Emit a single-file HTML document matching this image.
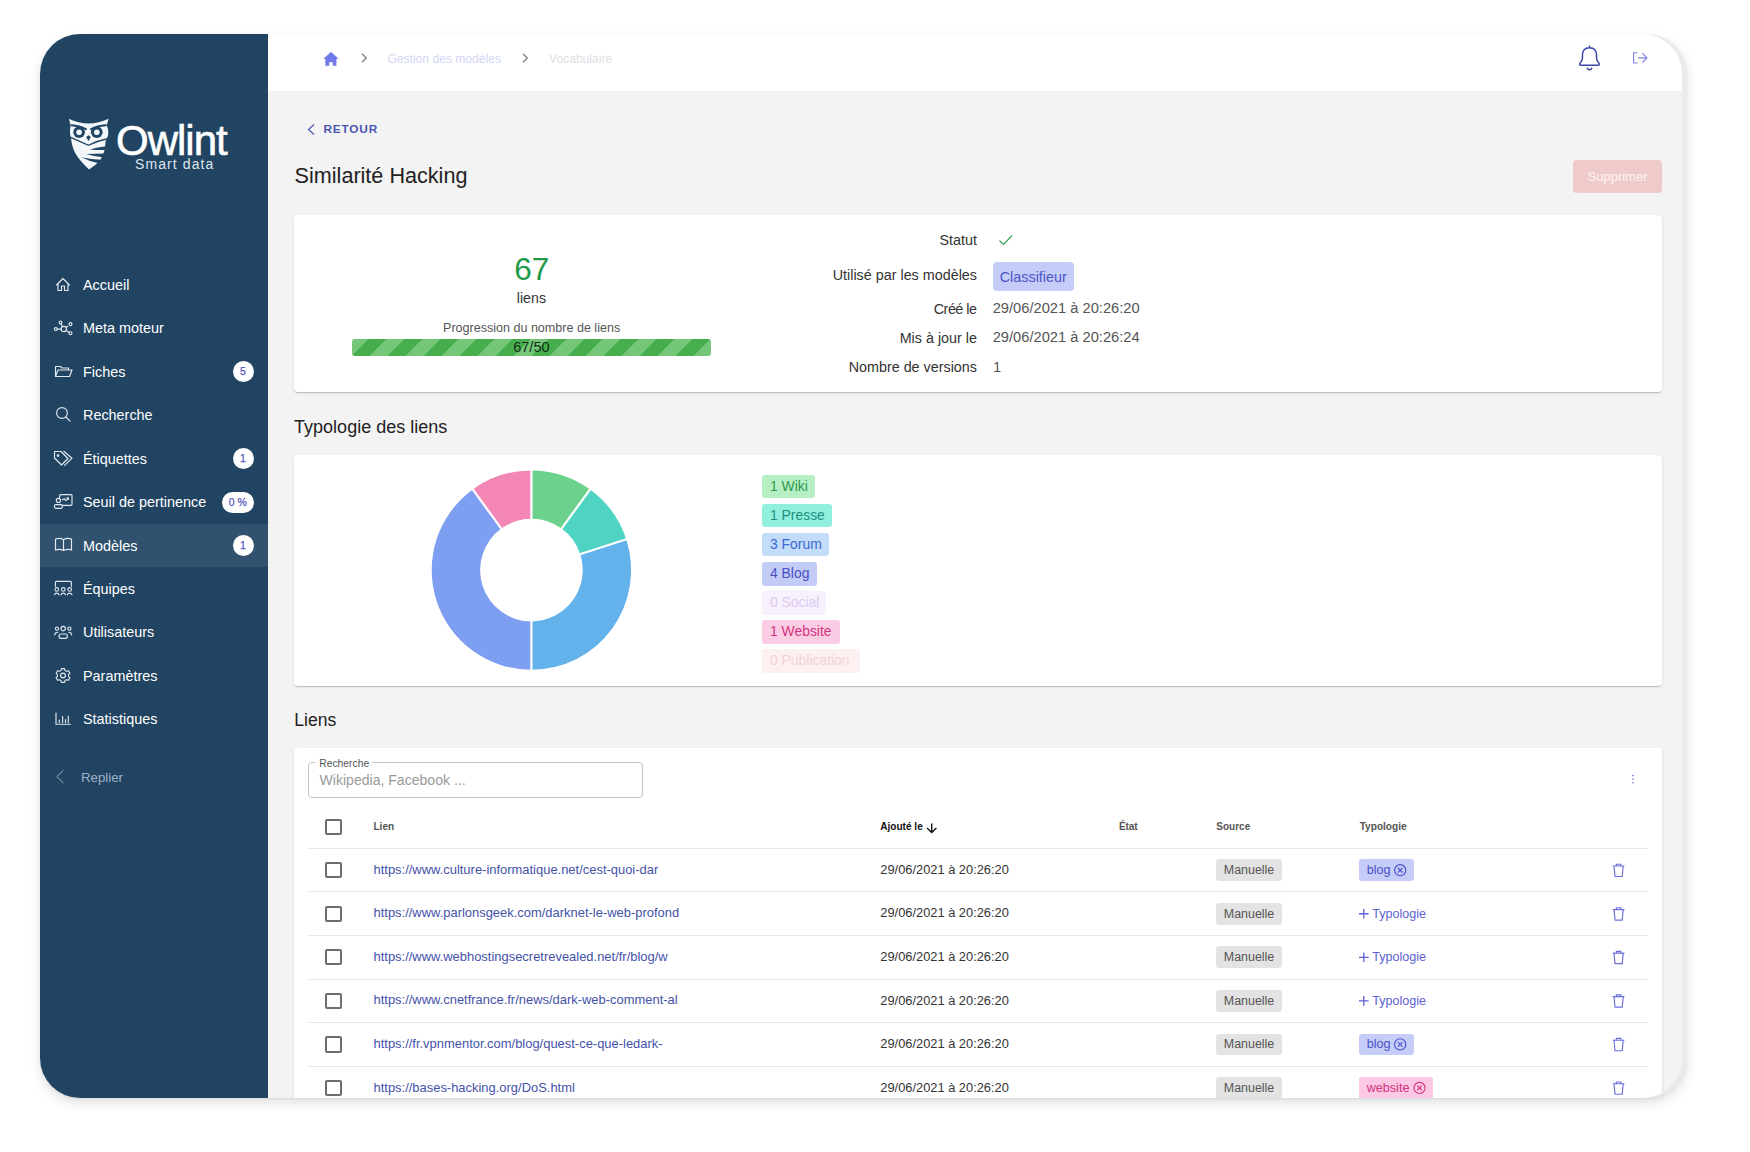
<!DOCTYPE html>
<html><head><meta charset="utf-8">
<style>
*{margin:0;padding:0;box-sizing:border-box}
html,body{width:1750px;height:1152px;background:#fff;overflow:hidden;font-family:"Liberation Sans",sans-serif}
.shadow{position:absolute;left:40px;top:34px;width:1647px;height:1064px;border-radius:40px;background:#ebebeb;box-shadow:0 5px 12px rgba(0,0,0,0.12),0 1px 2px rgba(0,0,0,0.06)}
.frame{position:absolute;left:40px;top:34px;width:1642px;height:1064px;border-radius:40px;overflow:hidden;background:#f3f3f3}
.pg{position:absolute;left:-40px;top:-34px;width:1750px;height:1152px}
.side{position:absolute;left:40px;top:34px;width:227.5px;height:1064px;background:#214462}
.hdr{position:absolute;left:267.5px;top:34px;width:1414.5px;height:57px;background:#fff}
.abs{position:absolute;white-space:nowrap}
.card{position:absolute;background:#fff;border-radius:4px;box-shadow:0 2px 1px -1px rgba(0,0,0,.10),0 1px 1px 0 rgba(0,0,0,.08),0 1px 3px 0 rgba(0,0,0,.10)}
.badge{position:absolute;height:21px;border-radius:11px;background:#fff;color:#5658c0;font-size:10.5px;text-align:center;line-height:21px;-webkit-text-stroke:0.25px #5658c0}
.chip{position:absolute;border-radius:3px}
</style></head><body>
<div class="shadow"></div>
<div class="frame"><div class="pg">
<div class="side"></div>
<div class="hdr"></div>
<div class="abs" style="left:40px;top:523.7px;width:227.5px;height:43.5px;background:#30526f"></div>
<div class="abs" style="left:83px;top:277.81px;font-size:14.4px;color:#fff;line-height:14.4px;">Accueil</div>
<div class="abs" style="left:83px;top:321.31px;font-size:14.4px;color:#fff;line-height:14.4px;">Meta moteur</div>
<div class="abs" style="left:83px;top:364.81px;font-size:14.4px;color:#fff;line-height:14.4px;">Fiches</div>
<div class="abs" style="left:83px;top:408.31px;font-size:14.4px;color:#fff;line-height:14.4px;">Recherche</div>
<div class="abs" style="left:83px;top:451.81px;font-size:14.4px;color:#fff;line-height:14.4px;">Étiquettes</div>
<div class="abs" style="left:83px;top:494.81px;font-size:14.4px;color:#fff;line-height:14.4px;">Seuil de pertinence</div>
<div class="abs" style="left:83px;top:538.51px;font-size:14.4px;color:#fff;line-height:14.4px;">Modèles</div>
<div class="abs" style="left:83px;top:581.81px;font-size:14.4px;color:#fff;line-height:14.4px;">Équipes</div>
<div class="abs" style="left:83px;top:625.31px;font-size:14.4px;color:#fff;line-height:14.4px;">Utilisateurs</div>
<div class="abs" style="left:83px;top:668.81px;font-size:14.4px;color:#fff;line-height:14.4px;">Paramètres</div>
<div class="abs" style="left:83px;top:712.31px;font-size:14.4px;color:#fff;line-height:14.4px;">Statistiques</div>
<div class="abs" style="left:80.9px;top:770.74px;font-size:13.3px;color:#9fb1c6;line-height:13.3px;">Replier</div>
<div class="badge" style="left:232.5px;top:360.75px;width:21px;height:21.5px;line-height:21.5px">5</div>
<div class="badge" style="left:232.5px;top:447.75px;width:21px;height:21.5px;line-height:21.5px">1</div>
<div class="badge" style="left:222px;top:491.55px;width:31.5px;height:21.5px;line-height:21.5px">0 %</div>
<div class="badge" style="left:232.5px;top:534.85px;width:21px;height:21.5px;line-height:21.5px">1</div>
<svg class="abs" style="left:0;top:0" width="300" height="800" fill="none" stroke="#e1e8ef" stroke-width="1.15" stroke-linecap="round" stroke-linejoin="round">
<path d="M56.5 285 63 278.5 69.5 285M58 283.5V290.5h3.5V286h3v4.5H68V283.5"/>
<circle cx="63.85" cy="329" r="2.7"/><circle cx="55.8" cy="329.1" r="1.5"/><circle cx="60.5" cy="322.4" r="1.4"/><circle cx="70.5" cy="324.1" r="1.5"/><circle cx="70.5" cy="333.2" r="1.5"/>
<path d="M57.3 329.1h3.8M61.1 323.7l1.4 2.9M66.2 327.4l1.6-1.1M66.2 330.6l3.1 1.8"/>
<path d="M55.5 376.5V366.5h5l1.5 1.5h6.5v2M55.5 376.5 58 370h14l-2.5 6.5z"/>
<circle cx="62" cy="413" r="5.4"/><path d="m66 417 4 4.2"/>
<path d="M54.5 451.5h6.5l7 7-6.5 6.5-7-7zM63.8 451.3l8.2 6.9-7.4 7.2"/><circle cx="58" cy="455.5" r="0.8" fill="#fff"/>
<path d="M59.6 498V495.6q0-1 1-1H71q1 0 1 1V504.3q0 1-1 1H62.6M62.6 499.8l1.6-1.2 1.6 2 2.6-2.2M66.8 497.9h1.6v1.6"/><circle cx="58.4" cy="500.4" r="2.1"/><rect x="54.5" y="504.6" width="7.8" height="3.7" rx="1.2"/>
<path d="M55.5 539q4-1.5 8 .5 4-2 8-.5v11q-4-1.5-8 .5-4-2-8-.5zM63.5 539.5v11"/>
<path d="M55.4 586.3V582.3q0-1 1-1H70.4q1 0 1 1V586.3"/><circle cx="56.8" cy="589.4" r="1.8"/><circle cx="63.3" cy="589.4" r="1.8"/><circle cx="69.7" cy="589.4" r="1.8"/>
<path d="M54.5 594.8q.6-1.7 2.3-1.7t2.3 1.7M61 594.8q.6-1.7 2.3-1.7t2.3 1.7M67.4 594.8q.6-1.7 2.3-1.7t2.3 1.7"/>
<circle cx="63.2" cy="628.6" r="2.2"/><circle cx="57" cy="628.6" r="1.6"/><circle cx="69.4" cy="628.6" r="1.6"/>
<rect x="59" y="634" width="8.4" height="4.3" rx="2"/><path d="M54.7 635q.3-2.8 3-2.8M71.7 635q-.3-2.8-3-2.8"/>
<circle cx="63" cy="675.5" r="2.4"/>
<path d="M61.5 668.6h3l.5 1.8 1.6.9 1.8-.6 1.5 2.6-1.4 1.3v1.8l1.4 1.3-1.5 2.6-1.8-.6-1.6.9-.5 1.8h-3l-.5-1.8-1.6-.9-1.8.6-1.5-2.6 1.4-1.3v-1.8l-1.4-1.3 1.5-2.6 1.8.6 1.6-.9z"/>
<path d="M56 713v11.2h14.5M59.3 722.5v-2.5M62.6 722.5v-6M65.5 722.5v-3M68.3 722.5v-6.5"/>
<path stroke="#9fb1c6" stroke-width="1" d="M63.2 770.6 56.8 776.6 63.2 782.8"/></svg>
<svg class="abs" style="left:64px;top:114px" width="50" height="60" viewBox="0 0 960 1152">
<path fill="#f4f7fa" d="M90 90Q470 270 855 90Q835 175 815 215Q865 300 845 420Q805 480 795 540Q800 700 700 880Q600 1000 480 1065Q300 900 220 760Q140 600 135 450Q95 360 130 220Q110 160 95 95Z"/>
<g fill="none" stroke="#214462" stroke-width="34" stroke-linecap="round"><path d="M150 215Q300 225 420 290M800 215Q640 225 520 290" stroke-width="40"/><path d="M140 455Q300 525 470 600Q620 520 815 480" stroke-width="26"/></g>
<circle cx="290" cy="350" r="112" fill="#214462"/><circle cx="630" cy="350" r="112" fill="#214462"/>
<circle cx="290" cy="350" r="54" fill="#f4f7fa"/><circle cx="630" cy="350" r="54" fill="#f4f7fa"/>
<path fill="#214462" d="M425 440L470 410 515 440 470 520Z"/>
<path fill="#214462" d="M830 615Q650 640 490 680Q650 695 800 690Z"/>
<path fill="#214462" d="M790 760Q600 765 425 770Q600 825 750 830Z"/>
<path fill="#214462" d="M715 880Q520 870 335 830Q500 915 650 940Z"/>
</svg>
<div class="abs" style="left:116px;top:120.45px;font-size:42px;color:#fff;line-height:42px;letter-spacing:-1px;-webkit-text-stroke:0.6px #fff;">Owlint</div>
<div class="abs" style="left:135px;top:156.75px;font-size:14px;color:#dfe6ee;line-height:14px;letter-spacing:1.1px;">Smart data</div>
<svg class="abs" style="left:0;top:0" width="400" height="100"><path fill="#7178e8" stroke="#7178e8" stroke-width="0.6" stroke-linejoin="round" d="M331 52.2 323.9 58.6H325.7V65.6H328.9V61.9H333.1V65.6H336.1V58.6H338.1Z"/></svg>
<svg class="abs" style="left:359px;top:52px" width="10" height="12" viewBox="0 0 10 12" fill="none" stroke="#858585" stroke-width="1.4"><path d="M3 1.8 7.2 6 3 10.2"/></svg>
<div class="abs" style="left:387.4px;top:53.46px;font-size:12.1px;color:#d3d6f6;line-height:12.1px;">Gestion des modèles</div>
<svg class="abs" style="left:520px;top:52px" width="10" height="12" viewBox="0 0 10 12" fill="none" stroke="#858585" stroke-width="1.4"><path d="M3 1.8 7.2 6 3 10.2"/></svg>
<div class="abs" style="left:549px;top:53.46px;font-size:12.1px;color:#e0e0e4;line-height:12.1px;">Vocabulaire</div>
<svg class="abs" style="left:0;top:0" width="1700" height="100" fill="none" stroke="#3d47ab" stroke-width="1.5" stroke-linecap="round" stroke-linejoin="round"><path d="M1589.5 45.9V47.8M1589.5 47.8C1584.3 47.8 1582.4 51.8 1582.4 56V58.5C1582.4 61 1580.3 62.3 1579.8 63.6Q1579.5 65.2 1580.8 65.2H1598.2Q1599.5 65.2 1599.2 63.6C1598.7 62.3 1596.6 61 1596.6 58.5V56C1596.6 51.8 1594.7 47.8 1589.5 47.8ZM1587.3 68.4Q1589.5 71 1591.7 68.4"/></svg>
<svg class="abs" style="left:0;top:0" width="1700" height="100" fill="none" stroke="#7c81e4" stroke-width="1.15" stroke-linejoin="round"><path d="M1637.4 52.7H1633.6V63H1637.4M1638 57.8H1646.5M1642.4 53.2 1647 57.8 1642.4 62.5"/></svg>
<svg class="abs" style="left:0;top:0" width="400" height="200" fill="none" stroke="#4c56b5" stroke-width="1.2"><path d="M314 124.5 308.5 129.5 314 134.5"/></svg>
<div class="abs" style="left:323.4px;top:124.01px;font-size:11.8px;color:#4b55b3;line-height:11.8px;font-weight:bold;letter-spacing:0.85px;">RETOUR</div>
<div class="abs" style="left:294.6px;top:165.42px;font-size:21.6px;color:#222;line-height:21.6px;">Similarité Hacking</div>
<div class="abs" style="left:1573px;top:160px;width:89px;height:33px;border-radius:4px;background:#eecacb;color:#fdf3f3;font-size:13px;line-height:33px;text-align:center">Supprimer</div>
<div class="card" style="left:294px;top:215px;width:1368px;height:177px"></div>
<div class="abs" style="left:431.70000000000005px;width:200px;text-align:center;top:253.94px;font-size:31.5px;color:#1f9a4a;line-height:31.5px;">67</div>
<div class="abs" style="left:431.4px;width:200px;text-align:center;top:290.78px;font-size:14.2px;color:#333;line-height:14.2px;">liens</div>
<div class="abs" style="left:381.6px;width:300px;text-align:center;top:321.98px;font-size:12.55px;color:#555;line-height:12.55px;">Progression du nombre de liens</div>
<div class="abs" style="left:352px;top:338.8px;width:359px;height:17px;border-radius:3px;background:repeating-linear-gradient(-45deg,#74c678 0 12.7px,#46ae4c 12.7px 25.4px)"></div>
<div class="abs" style="left:481.4px;width:100px;text-align:center;top:339.64px;font-size:14.6px;color:#142e14;line-height:14.6px;">67/50</div>
<div class="abs" style="right:773px;top:233.25px;font-size:14.35px;color:#333;line-height:14.35px;text-align:right;">Statut</div>
<div class="abs" style="right:773px;top:267.85px;font-size:14.35px;color:#333;line-height:14.35px;text-align:right;">Utilisé par les modèles</div>
<div class="abs" style="right:773px;top:301.65px;font-size:14.35px;color:#333;line-height:14.35px;text-align:right;letter-spacing:-0.5px;margin-right:0.5px;">Créé le</div>
<div class="abs" style="right:773px;top:330.75px;font-size:14.35px;color:#333;line-height:14.35px;text-align:right;">Mis à jour le</div>
<div class="abs" style="right:773px;top:360.05px;font-size:14.35px;color:#333;line-height:14.35px;text-align:right;">Nombre de versions</div>
<svg class="abs" style="left:0;top:0" width="1100" height="300" fill="none" stroke="#35a556" stroke-width="1.2"><path d="M999.5 240.5 1003.5 244.5 1012 235.5"/></svg>
<div class="chip" style="left:992.5px;top:262.3px;width:81.5px;height:28.4px;background:#c6ccf8;border-radius:4px"></div>
<div class="abs" style="left:999.7px;top:270.11px;font-size:14.4px;color:#4b55c8;line-height:14.4px;">Classifieur</div>
<div class="abs" style="left:992.7px;top:301.36px;font-size:14.7px;color:#555;line-height:14.7px;">29/06/2021 à 20:26:20</div>
<div class="abs" style="left:992.7px;top:330.46px;font-size:14.7px;color:#555;line-height:14.7px;">29/06/2021 à 20:26:24</div>
<div class="abs" style="left:993px;top:359.76px;font-size:14.7px;color:#555;line-height:14.7px;">1</div>
<div class="abs" style="left:294.1px;top:418.26px;font-size:18px;color:#222;line-height:18px;">Typologie des liens</div>
<div class="card" style="left:294px;top:455px;width:1368px;height:231px"></div>
<svg class="abs" style="left:0;top:0" width="1750" height="1152"><path fill="#6dd18e" d="M531.40 470.40A99.7 99.7 0 0 1 590.00 489.44L561.55 528.60A51.3 51.3 0 0 0 531.40 518.80Z"/><path fill="#4fd3c3" d="M590.00 489.44A99.7 99.7 0 0 1 626.22 539.29L580.19 554.25A51.3 51.3 0 0 0 561.55 528.60Z"/><path fill="#63b2ec" d="M626.22 539.29A99.7 99.7 0 0 1 531.40 669.80L531.40 621.40A51.3 51.3 0 0 0 580.19 554.25Z"/><path fill="#7e9ef1" d="M531.40 669.80A99.7 99.7 0 0 1 472.80 489.44L501.25 528.60A51.3 51.3 0 0 0 531.40 621.40Z"/><path fill="#f486b6" d="M472.80 489.44A99.7 99.7 0 0 1 531.40 470.40L531.40 518.80A51.3 51.3 0 0 0 501.25 528.60Z"/><path stroke="#fff" stroke-width="2.2" d="M531.40 519.80L531.40 469.40"/><path stroke="#fff" stroke-width="2.2" d="M560.97 529.41L590.59 488.63"/><path stroke="#fff" stroke-width="2.2" d="M579.24 554.56L627.17 538.98"/><path stroke="#fff" stroke-width="2.2" d="M531.40 620.40L531.40 670.80"/><path stroke="#fff" stroke-width="2.2" d="M501.83 529.41L472.21 488.63"/></svg>
<div class="chip" style="left:762.3px;top:474.7px;width:52.7px;height:23.8px;background:#b7efc5"></div>
<div class="abs" style="left:770px;top:479.83px;font-size:13.9px;color:#2b9a4b;line-height:13.9px;">1 Wiki</div>
<div class="chip" style="left:762.3px;top:503.6px;width:69.7px;height:23.8px;background:#90f0dd"></div>
<div class="abs" style="left:770px;top:508.73px;font-size:13.9px;color:#1e8f7f;line-height:13.9px;">1 Presse</div>
<div class="chip" style="left:762.3px;top:532.7px;width:66.7px;height:23.8px;background:#c2dcfa"></div>
<div class="abs" style="left:770px;top:537.83px;font-size:13.9px;color:#3a68d4;line-height:13.9px;">3 Forum</div>
<div class="chip" style="left:762.3px;top:561.8px;width:54.7px;height:23.8px;background:#c3cbf7"></div>
<div class="abs" style="left:770px;top:566.93px;font-size:13.9px;color:#4a4fc4;line-height:13.9px;">4 Blog</div>
<div class="chip" style="left:762.3px;top:591px;width:64.2px;height:23.8px;background:#f8f1fd"></div>
<div class="abs" style="left:770px;top:596.13px;font-size:13.9px;color:#dacbed;line-height:13.9px;">0 Social</div>
<div class="chip" style="left:762.3px;top:620px;width:77.7px;height:23.8px;background:#fbcde5"></div>
<div class="abs" style="left:770px;top:625.13px;font-size:13.9px;color:#d2337e;line-height:13.9px;">1 Website</div>
<div class="chip" style="left:762.3px;top:649px;width:97.7px;height:23.8px;background:#fdf0f1"></div>
<div class="abs" style="left:770px;top:654.13px;font-size:13.9px;color:#f1d2d6;line-height:13.9px;">0 Publication</div>
<div class="abs" style="left:294.2px;top:711.90px;font-size:17.6px;color:#222;line-height:17.6px;">Liens</div>
<div class="card" style="left:294px;top:748px;width:1368px;height:400px"></div>
<div class="abs" style="left:308.3px;top:762.1px;width:334.5px;height:36px;border:1px solid #c4c4c4;border-radius:4px"></div>
<div class="abs" style="left:315.4px;top:758px;width:57px;height:8px;background:#fff"></div>
<div class="abs" style="left:319.2px;top:758.64px;font-size:10.35px;color:#555;line-height:10.35px;">Recherche</div>
<div class="abs" style="left:319.6px;top:773.41px;font-size:14.05px;color:#9a9a9a;line-height:14.05px;">Wikipedia, Facebook ...</div>
<svg class="abs" style="left:0;top:0" width="1700" height="800" fill="#6b70d6"><circle cx="1633" cy="775.6" r="0.8"/><circle cx="1633" cy="779.2" r="0.8"/><circle cx="1633" cy="782.8" r="0.8"/></svg>
<div class="abs" style="left:325.2px;top:818.9px;width:16.4px;height:16.4px;border:2px solid #6e6e6e;border-radius:2px"></div>
<div class="abs" style="left:373.5px;top:821.93px;font-size:10px;color:#555;line-height:10px;font-weight:bold;">Lien</div>
<div class="abs" style="left:880.3px;top:821.79px;font-size:10.05px;color:#111;line-height:10.05px;font-weight:bold;">Ajouté le</div>
<svg class="abs" style="left:0;top:0" width="1000" height="900" fill="none" stroke="#111" stroke-width="1.4"><path d="M931.7 823.6v8.6M927 828l4.7 4.5 4.7-4.5"/></svg>
<div class="abs" style="left:1119px;top:821.67px;font-size:10.2px;color:#555;line-height:10.2px;font-weight:bold;letter-spacing:-0.2px;">État</div>
<div class="abs" style="left:1216.3px;top:821.93px;font-size:10px;color:#555;line-height:10px;font-weight:bold;">Source</div>
<div class="abs" style="left:1359.7px;top:821.85px;font-size:10.1px;color:#555;line-height:10.1px;font-weight:bold;">Typologie</div>
<div class="abs" style="left:308px;top:847.90px;width:1339.5px;height:1px;background:#e9e9e9"></div>
<div class="abs" style="left:325.2px;top:862.00px;width:16.4px;height:16.4px;border:2px solid #6e6e6e;border-radius:2px"></div>
<div class="abs" style="left:373.5px;top:863.84px;font-size:12.95px;color:#4452a9;line-height:12.95px;">https://www.culture-informatique.net/cest-quoi-dar</div>
<div class="abs" style="left:880.3px;top:863.92px;font-size:12.85px;color:#333;line-height:12.85px;">29/06/2021 à 20:26:20</div>
<div class="chip" style="left:1216px;top:859.30px;width:65.7px;height:21.8px;background:#e3e3e3"></div>
<div class="abs" style="left:1223.8px;top:864.26px;font-size:12.45px;color:#555;line-height:12.45px;">Manuelle</div>
<div class="chip" style="left:1359.3px;top:859.30px;width:54.7px;height:21.8px;background:#c5ccf8"></div>
<div class="abs" style="left:1366.7px;top:864.13px;font-size:12.6px;color:#4b52c6;line-height:12.6px;">blog</div>
<svg class="abs" style="left:0;top:0" width="1700" height="1152" fill="none" stroke="#4b52c6" stroke-width="1.1"><circle cx="1400.2" cy="870.1999999999999" r="5.6"/><path d="M1397.9 867.9l4.6 4.6M1402.5 867.9l-4.6 4.6"/></svg>
<svg class="abs" style="left:0;top:0" width="1700" height="1152" fill="none" stroke="#6a6fdc" stroke-width="1.15" stroke-linejoin="round"><path d="M1612.8 866.00h11.6M1616.3 866.00v-1.8h4.6v1.8M1614 866.00l1 10.5h7.2l1-10.5"/></svg>
<div class="abs" style="left:308px;top:891.45px;width:1339.5px;height:1px;background:#e9e9e9"></div>
<div class="abs" style="left:325.2px;top:905.55px;width:16.4px;height:16.4px;border:2px solid #6e6e6e;border-radius:2px"></div>
<div class="abs" style="left:373.5px;top:907.39px;font-size:12.95px;color:#4452a9;line-height:12.95px;">https://www.parlonsgeek.com/darknet-le-web-profond</div>
<div class="abs" style="left:880.3px;top:907.47px;font-size:12.85px;color:#333;line-height:12.85px;">29/06/2021 à 20:26:20</div>
<div class="chip" style="left:1216px;top:902.85px;width:65.7px;height:21.8px;background:#e3e3e3"></div>
<div class="abs" style="left:1223.8px;top:907.81px;font-size:12.45px;color:#555;line-height:12.45px;">Manuelle</div>
<svg class="abs" style="left:0;top:0" width="1700" height="1152" fill="none" stroke="#5d62d2" stroke-width="1.3"><path d="M1359 913.75h9.6M1363.8 908.95v9.6"/></svg>
<div class="abs" style="left:1372.3px;top:907.71px;font-size:12.57px;color:#5d62d2;line-height:12.57px;">Typologie</div>
<svg class="abs" style="left:0;top:0" width="1700" height="1152" fill="none" stroke="#6a6fdc" stroke-width="1.15" stroke-linejoin="round"><path d="M1612.8 909.55h11.6M1616.3 909.55v-1.8h4.6v1.8M1614 909.55l1 10.5h7.2l1-10.5"/></svg>
<div class="abs" style="left:308px;top:935.00px;width:1339.5px;height:1px;background:#e9e9e9"></div>
<div class="abs" style="left:325.2px;top:949.10px;width:16.4px;height:16.4px;border:2px solid #6e6e6e;border-radius:2px"></div>
<div class="abs" style="left:373.5px;top:950.94px;font-size:12.95px;color:#4452a9;line-height:12.95px;">https://www.webhostingsecretrevealed.net/fr/blog/w</div>
<div class="abs" style="left:880.3px;top:951.02px;font-size:12.85px;color:#333;line-height:12.85px;">29/06/2021 à 20:26:20</div>
<div class="chip" style="left:1216px;top:946.40px;width:65.7px;height:21.8px;background:#e3e3e3"></div>
<div class="abs" style="left:1223.8px;top:951.36px;font-size:12.45px;color:#555;line-height:12.45px;">Manuelle</div>
<svg class="abs" style="left:0;top:0" width="1700" height="1152" fill="none" stroke="#5d62d2" stroke-width="1.3"><path d="M1359 957.30h9.6M1363.8 952.50v9.6"/></svg>
<div class="abs" style="left:1372.3px;top:951.26px;font-size:12.57px;color:#5d62d2;line-height:12.57px;">Typologie</div>
<svg class="abs" style="left:0;top:0" width="1700" height="1152" fill="none" stroke="#6a6fdc" stroke-width="1.15" stroke-linejoin="round"><path d="M1612.8 953.10h11.6M1616.3 953.10v-1.8h4.6v1.8M1614 953.10l1 10.5h7.2l1-10.5"/></svg>
<div class="abs" style="left:308px;top:978.55px;width:1339.5px;height:1px;background:#e9e9e9"></div>
<div class="abs" style="left:325.2px;top:992.65px;width:16.4px;height:16.4px;border:2px solid #6e6e6e;border-radius:2px"></div>
<div class="abs" style="left:373.5px;top:994.49px;font-size:12.95px;color:#4452a9;line-height:12.95px;">https://www.cnetfrance.fr/news/dark-web-comment-al</div>
<div class="abs" style="left:880.3px;top:994.57px;font-size:12.85px;color:#333;line-height:12.85px;">29/06/2021 à 20:26:20</div>
<div class="chip" style="left:1216px;top:989.95px;width:65.7px;height:21.8px;background:#e3e3e3"></div>
<div class="abs" style="left:1223.8px;top:994.91px;font-size:12.45px;color:#555;line-height:12.45px;">Manuelle</div>
<svg class="abs" style="left:0;top:0" width="1700" height="1152" fill="none" stroke="#5d62d2" stroke-width="1.3"><path d="M1359 1000.85h9.6M1363.8 996.05v9.6"/></svg>
<div class="abs" style="left:1372.3px;top:994.81px;font-size:12.57px;color:#5d62d2;line-height:12.57px;">Typologie</div>
<svg class="abs" style="left:0;top:0" width="1700" height="1152" fill="none" stroke="#6a6fdc" stroke-width="1.15" stroke-linejoin="round"><path d="M1612.8 996.65h11.6M1616.3 996.65v-1.8h4.6v1.8M1614 996.65l1 10.5h7.2l1-10.5"/></svg>
<div class="abs" style="left:308px;top:1022.10px;width:1339.5px;height:1px;background:#e9e9e9"></div>
<div class="abs" style="left:325.2px;top:1036.20px;width:16.4px;height:16.4px;border:2px solid #6e6e6e;border-radius:2px"></div>
<div class="abs" style="left:373.5px;top:1038.04px;font-size:12.95px;color:#4452a9;line-height:12.95px;">https://fr.vpnmentor.com/blog/quest-ce-que-ledark-</div>
<div class="abs" style="left:880.3px;top:1038.12px;font-size:12.85px;color:#333;line-height:12.85px;">29/06/2021 à 20:26:20</div>
<div class="chip" style="left:1216px;top:1033.50px;width:65.7px;height:21.8px;background:#e3e3e3"></div>
<div class="abs" style="left:1223.8px;top:1038.46px;font-size:12.45px;color:#555;line-height:12.45px;">Manuelle</div>
<div class="chip" style="left:1359.3px;top:1033.50px;width:54.7px;height:21.8px;background:#c5ccf8"></div>
<div class="abs" style="left:1366.7px;top:1038.33px;font-size:12.6px;color:#4b52c6;line-height:12.6px;">blog</div>
<svg class="abs" style="left:0;top:0" width="1700" height="1152" fill="none" stroke="#4b52c6" stroke-width="1.1"><circle cx="1400.2" cy="1044.3999999999999" r="5.6"/><path d="M1397.9 1042.1l4.6 4.6M1402.5 1042.1l-4.6 4.6"/></svg>
<svg class="abs" style="left:0;top:0" width="1700" height="1152" fill="none" stroke="#6a6fdc" stroke-width="1.15" stroke-linejoin="round"><path d="M1612.8 1040.20h11.6M1616.3 1040.20v-1.8h4.6v1.8M1614 1040.20l1 10.5h7.2l1-10.5"/></svg>
<div class="abs" style="left:308px;top:1065.65px;width:1339.5px;height:1px;background:#e9e9e9"></div>
<div class="abs" style="left:325.2px;top:1079.75px;width:16.4px;height:16.4px;border:2px solid #6e6e6e;border-radius:2px"></div>
<div class="abs" style="left:373.5px;top:1081.59px;font-size:12.95px;color:#4452a9;line-height:12.95px;">https://bases-hacking.org/DoS.html</div>
<div class="abs" style="left:880.3px;top:1081.67px;font-size:12.85px;color:#333;line-height:12.85px;">29/06/2021 à 20:26:20</div>
<div class="chip" style="left:1216px;top:1077.05px;width:65.7px;height:21.8px;background:#e3e3e3"></div>
<div class="abs" style="left:1223.8px;top:1082.01px;font-size:12.45px;color:#555;line-height:12.45px;">Manuelle</div>
<div class="chip" style="left:1359.3px;top:1077.05px;width:74px;height:21.8px;background:#fbc9e3"></div>
<div class="abs" style="left:1366.7px;top:1081.88px;font-size:12.6px;color:#d3337e;line-height:12.6px;">website</div>
<svg class="abs" style="left:0;top:0" width="1700" height="1152" fill="none" stroke="#d3337e" stroke-width="1.1"><circle cx="1419.5" cy="1087.95" r="5.6"/><path d="M1417.2 1085.65l4.6 4.6M1421.8 1085.65l-4.6 4.6"/></svg>
<svg class="abs" style="left:0;top:0" width="1700" height="1152" fill="none" stroke="#6a6fdc" stroke-width="1.15" stroke-linejoin="round"><path d="M1612.8 1083.75h11.6M1616.3 1083.75v-1.8h4.6v1.8M1614 1083.75l1 10.5h7.2l1-10.5"/></svg>
</div></div>
</body></html>
